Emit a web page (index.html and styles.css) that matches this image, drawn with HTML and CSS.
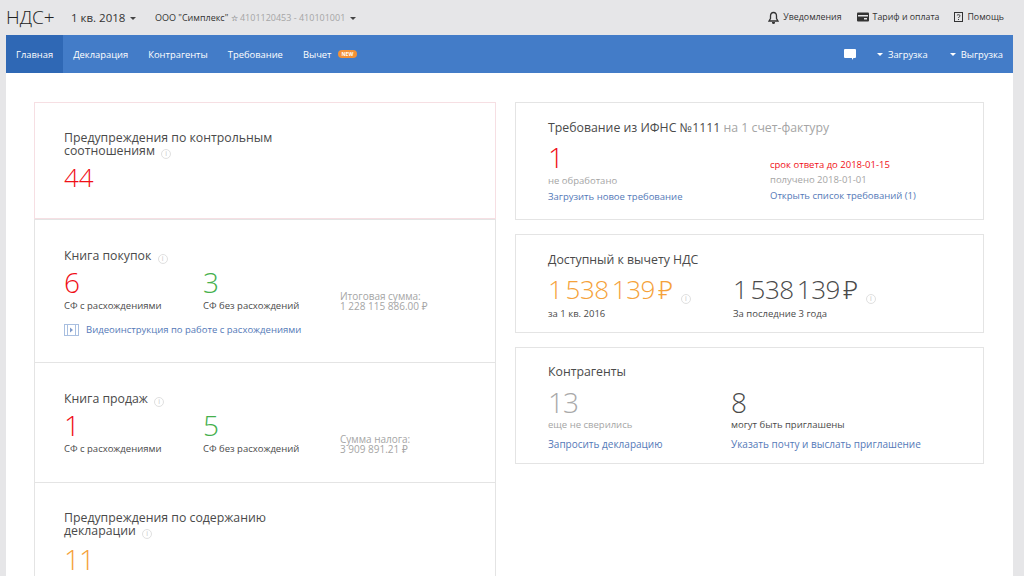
FILE: index.html
```html
<!DOCTYPE html>
<html lang="en">

<head>
    <meta charset="UTF-8">
    <title>НДС+</title>
    <link rel="stylesheet" href="styles.css">
</head>

<body>
    <div class="topbar">
        <span class="logo">НДС+</span>
        <span class="period">1 кв. 2018 <i class="caret"></i></span>
        <span class="company">ООО "Симплекс" <span class="star">☆</span> <span class="inn">4101120453 - 410101001</span> <i class="caret dark"></i></span>
        <div class="toplinks">
            <a class="toplink">
                <svg width="11" height="13" viewBox="0 0 11 13"><path d="M5.5 1.5C3.5 1.5 2.5 3 2.5 5v2.5L1 10h9L8.5 7.5V5c0-2-1-3.500-3-3.500z" fill="none" stroke="#333" stroke-width="1.300"/><path d="M4 11h3v.5a1.500 1.500 0 0 1-3 0z" fill="#333"/></svg>
                Уведомления
            </a>
            <a class="toplink">
                <svg width="12" height="10" viewBox="0 0 12 10"><rect width="12" height="9" y="0.500" rx="1" fill="#333"/><rect x="1" y="3" width="10" height="1.500" fill="#e6e6e8"/><rect x="7" y="6" width="3" height="1.500" fill="#e6e6e8"/></svg>
                Тариф и оплата
            </a>
            <a class="toplink">
                <svg width="9" height="10" viewBox="0 0 9 10"><rect x="0.500" y="0.500" width="8" height="9" fill="none" stroke="#333"/><path d="M3 3.500C3 2.500 6 2.300 6 3.800 6 5 4.500 4.800 4.500 6M4.500 7v1" fill="none" stroke="#333"/></svg>
                Помощь
            </a>
        </div>
    </div>

    <nav class="nav">
        <a class="nav-item active">Главная</a>
        <a class="nav-item">Декларация</a>
        <a class="nav-item">Контрагенты</a>
        <a class="nav-item">Требование</a>
        <a class="nav-item">Вычет <span class="badge">NEW</span></a>
        <div class="nav-right">
            <svg class="chat" width="12" height="11" viewBox="0 0 12 11"><path d="M1 0h10a1 1 0 0 1 1 1v7a1 1 0 0 1-1 1h-1.500L8 11V9H1a1 1 0 0 1-1-1V1a1 1 0 0 1 1-1z" fill="#fff"/></svg>
            <a class="nav-drop"><i class="caret light"></i>Загрузка</a>
            <a class="nav-drop"><i class="caret light"></i>Выгрузка</a>
        </div>
    </nav>

    <main class="content">
        <div class="col-left">
            <section class="block warn">
                <h3 class="title">Предупреждения по контрольным соотношениям <i class="info"></i></h3>
                <div class="num red">44</div>
            </section>

            <section class="block buy">
                <h3 class="title">Книга покупок <i class="info"></i></h3>
                <div class="stats">
                    <div class="stat">
                        <div class="num red">6</div>
                        <div class="cap">СФ с расхождениями</div>
                    </div>
                    <div class="stat stat-b">
                        <div class="num green">3</div>
                        <div class="cap">СФ без расхождений</div>
                    </div>
                    <div class="total">Итоговая сумма:<br>1 228 115 886.00 ₽</div>
                </div>
                <a class="link video">
                    <svg width="15" height="12" viewBox="0 0 15 12"><rect x="0.500" y="0.500" width="14" height="11" fill="none" stroke="#a9bfe0"/><path d="M3.500 0v12M11.500 0v12" stroke="#a9bfe0"/><path d="M6 3.500L9 6 6 8.500z" fill="#7f9bcb"/></svg>
                    Видеоинструкция по работе с расхождениями
                </a>
            </section>

            <section class="block sell">
                <h3 class="title">Книга продаж <i class="info"></i></h3>
                <div class="stats">
                    <div class="stat">
                        <div class="num red">1</div>
                        <div class="cap">СФ с расхождениями</div>
                    </div>
                    <div class="stat stat-b">
                        <div class="num green">5</div>
                        <div class="cap">СФ без расхождений</div>
                    </div>
                    <div class="total">Сумма налога:<br>3 909 891.21 ₽</div>
                </div>
            </section>

            <section class="block warn2">
                <h3 class="title">Предупреждения по содержанию декларации <i class="info"></i></h3>
                <div class="num orange">11</div>
            </section>
        </div>

        <div class="col-right">
            <section class="card card-req">
                <h3 class="title">Требование из ИФНС №1111 <span class="muted">на 1 счет-фактуру</span></h3>
                <div class="cols">
                    <div class="col-a">
                        <div class="num red">1</div>
                        <div class="cap muted">не обработано</div>
                        <a class="link">Загрузить новое требование</a>
                    </div>
                    <div class="col-b">
                        <div class="cap red">срок ответа до 2018-01-15</div>
                        <div class="cap muted">получено 2018-01-01</div>
                        <a class="link">Открыть список требований (1)</a>
                    </div>
                </div>
            </section>

            <section class="card card-vat">
                <h3 class="title">Доступный к вычету НДС</h3>
                <div class="cols">
                    <div class="vat-a">
                        <div class="num orange">1 538 139 ₽ <i class="info"></i></div>
                        <div class="cap">за 1 кв. 2016</div>
                    </div>
                    <div class="vat-b">
                        <div class="num">1 538 139 ₽ <i class="info"></i></div>
                        <div class="cap">За последние 3 года</div>
                    </div>
                </div>
            </section>

            <section class="card card-partners">
                <h3 class="title">Контрагенты</h3>
                <div class="cols">
                    <div class="part-a">
                        <div class="num gray">13</div>
                        <div class="cap muted">еще не сверились</div>
                        <a class="link">Запросить декларацию</a>
                    </div>
                    <div class="part-b">
                        <div class="num">8</div>
                        <div class="cap">могут быть приглашены</div>
                        <a class="link">Указать почту и выслать приглашение</a>
                    </div>
                </div>
            </section>
        </div>
    </main>
</body>
</html>
```

FILE: styles.css
```css
* {
    box-sizing: border-box;
}
html, body {
    margin: 0;
    height: 576px;
    overflow: hidden;
}
body {
    background: #e6e6e8;
    color: #4a4a4a;
    font-family: "Open Sans", "Noto Sans", sans-serif;
    font-size: 9.5px;
}
.topbar {
    display: flex;
    align-items: center;
    height: 34px;
    padding: 0 20px 0 6px;
    color: #333;
}
.logo {
    font-size: 19px;
    font-weight: 300;
    color: #222;
    width: 65px;
}
.period {
    font-size: 11.5px;
    width: 84px;
}
.company {
    font-size: 9px;
}
.star {
    font-size: 8px;
}
.inn {
    color: #a5a5a5;
}
.toplinks {
    display: flex;
    gap: 15px;
    margin-left: auto;
}
.toplink {
    display: flex;
    align-items: center;
    gap: 4px;
    font-size: 8.8px;
}
.caret {
    display: inline-block;
    border-top: 3px solid #444;
    border-left: 3px solid transparent;
    border-right: 3px solid transparent;
    vertical-align: middle;
    margin-left: 2px;
}
.caret.light {
    border-top-color: #fff;
    margin: 0 5px 0 0;
}
.nav {
    display: flex;
    align-items: stretch;
    height: 38px;
    margin: 1px 11px 0 6px;
    background: #437cc8;
    color: #fff;
    font-size: 9.4px;
}
.nav-item {
    display: flex;
    align-items: center;
    padding: 0 10px;
}
.nav-item.active {
    background: #2f68b5;
}
.badge {
    margin-left: 6px;
    padding: 0 4px;
    background: #f39237;
    border-radius: 5px;
    font-size: 5px;
    font-weight: bold;
    line-height: 8px;
}
.nav-right {
    display: flex;
    align-items: center;
    margin-left: auto;
    padding-right: 10px;
}
.chat {
    margin-right: 21px;
}
.nav-drop + .nav-drop {
    margin-left: 22px;
}
.content {
    display: flex;
    gap: 19px;
    height: 504px;
    margin-right: 11px;
    margin-left: 6px;
    padding: 29px 28px 0;
    background: #fff;
    align-items: flex-start;
}
.col-left {
    width: 462px;
    flex: none;
    border: 1px solid #e4e4e4;
}
.col-right {
    width: 469px;
    flex: none;
    display: flex;
    flex-direction: column;
    gap: 14px;
}
.block {
    padding: 0 29px;
    border-top: 1px solid #e4e4e4;
}
.warn {
    height: 117px;
    padding-top: 28px;
    border: 1px solid #f6dfe3;
    margin: -1px -1px 0;
}
.warn .num {
    margin-top: 2px;
    letter-spacing: 0;
    font-size: 26px;
}
.buy {
    height: 143px;
    padding-top: 29px;
}
.sell {
    height: 120px;
    padding-top: 29px;
}
.warn2 {
    height: 120px;
    padding-top: 28px;
}
.warn2 .num {
    margin-top: 4px;
}
.title {
    margin: 0;
    color: #4a4a4a;
    font-size: 12.3px;
    font-weight: 400;
    line-height: 13px;
}
.warn .title, .warn2 .title {
    width: 240px;
}
.num {
    color: #4a4a4a;
    font-size: 28px;
    line-height: 33px;
    font-weight: 300;
    letter-spacing: -1px;
}
.red { color: #f00f17; }
.green { color: #45b04c; }
.orange { color: #f5a23a; }
.gray { color: #a9a9a9; }
.muted { color: #a5a5a5; }
.info {
    display: inline-flex;
    align-items: center;
    justify-content: center;
    width: 10px;
    height: 10px;
    margin-left: 3px;
    border: 1px solid #e0e0e0;
    border-radius: 50%;
    vertical-align: -1px;
    font-style: normal;
    font-size: 7px;
    line-height: 8px;
    letter-spacing: 0;
    word-spacing: 0;
    font-weight: 400;
    color: #c8c8c8;
}
.info::after {
    content: "i";
}
.stats {
    display: flex;
    align-items: flex-end;
    margin-top: 2px;
}
.stat {
    width: 139px;
}
.stat-b {
    width: 137px;
}
.cap {
    font-size: 9.5px;
    line-height: 13px;
}
.cap.red {
    color: #f00f17;
}
.cap.muted {
    color: #a5a5a5;
}
.total {
    color: #a5a5a5;
    font-size: 10px;
    line-height: 10px;
    padding-bottom: 1px;
}
.link {
    display: block;
    color: #5479b8;
    font-size: 9.5px;
    line-height: 14px;
}
.video {
    display: flex;
    align-items: center;
    gap: 7px;
    margin-top: 11px;
}
.card {
    padding: 18px 32px 0;
    border: 1px solid #e4e4e4;
}
.card-req {
    height: 118px;
}
.card-req .cols {
    margin-top: 7px;
}
.card-vat {
    height: 99px;
}
.card-vat .cols {
    margin-top: 7px;
}
.card-partners {
    height: 117px;
    padding-top: 17px;
}
.card-partners .cols {
    margin-top: 8px;
}
.card-partners .num {
    margin-bottom: -1px;
}
.cols {
    display: flex;
    align-items: flex-end;
}
.col-a {
    width: 222px;
}
.col-a .link {
    margin-top: 3px;
}
.col-b {
    padding-bottom: 1px;
}
.col-b .cap {
    line-height: 15px;
}
.col-b .link {
    margin-top: 2px;
}
.vat-a {
    width: 185px;
}
.vat-a .num, .vat-b .num {
    font-size: 26px;
    letter-spacing: -0.500px;
    word-spacing: -3px;
}
.vat-a .cap, .vat-b .cap {
    margin-top: 1px;
}
.vat-a .info, .vat-b .info {
    margin-left: 5px;
    vertical-align: -2px;
}
.part-a {
    width: 183px;
}
.part-a .link, .part-b .link {
    margin-top: 6px;
    font-size: 10px;
}
```
